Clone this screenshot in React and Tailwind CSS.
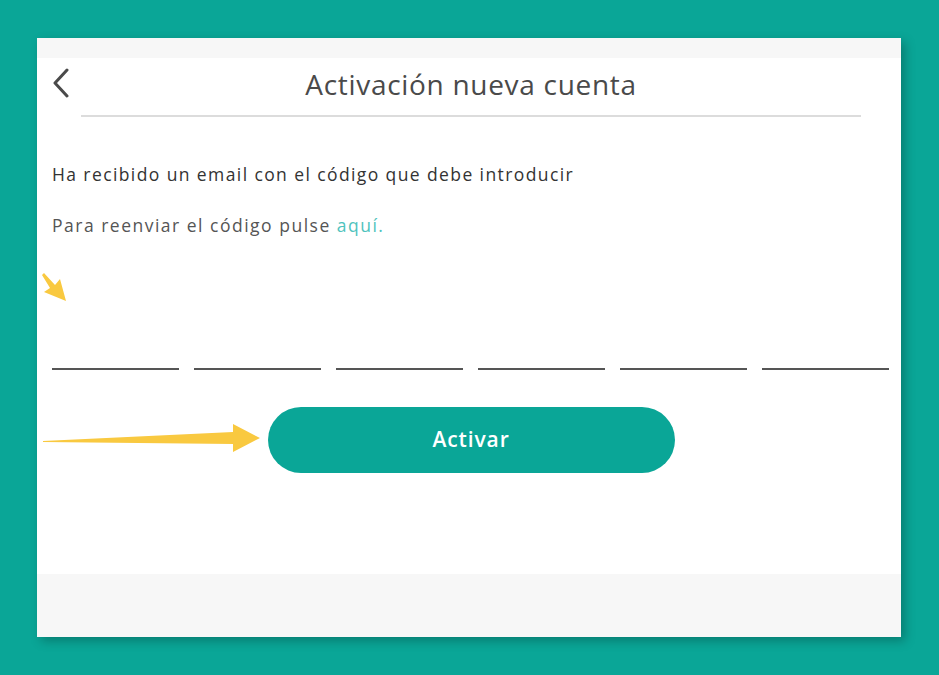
import React from "react";

const CODE_SLOTS = [0, 1, 2, 3, 4, 5];

export default function App() {
  return (
    <div
      className="relative min-h-[675px] w-full bg-[#0aa697] pt-[38px] pl-[37px]"
      style={{ fontFamily: '"Open Sans", "Noto Sans", sans-serif' }}
    >
      <div className="flex h-[599px] w-[864px] flex-col bg-[#f7f7f7] shadow-[4px_4px_10px_rgba(0,0,0,0.25)]">
        <div className="h-[20px]" />
        <main className="flex h-[516px] flex-col bg-white">
          <header className="relative flex h-[57px] items-center justify-center">
            <button className="absolute left-[14px] top-[10px] text-[#444]">
              <svg width="20" height="30" viewBox="0 0 20 30" fill="none">
                <path d="M16 2 L4 15 L16 28" stroke="#4a4a4a" strokeWidth="3" strokeLinecap="round" strokeLinejoin="round" />
              </svg>
            </button>
            <h1 className="mt-[-6px] ml-[4px] text-[28px] font-medium tracking-[0.7px] text-[#4a4a4a]">Activación nueva cuenta</h1>
          </header>
          <div className="ml-[44px] mr-[40px] h-[2px] bg-[#dcdcdc]" />

          <section className="pl-[15px] pr-[12px]">
            <p className="mt-[44px] text-[17.5px] leading-[26px] tracking-[1.4px] text-[#333]">Ha recibido un email con el código que debe introducir</p>
            <p className="mt-[25px] text-[17.5px] leading-[26px] tracking-[1.5px] text-[#555]">
              Para reenviar el código pulse <a className="text-[#4fc3bd]">aquí.</a>
            </p>

            <div className="mt-[112px] grid grid-cols-6 gap-[15px]">
              {CODE_SLOTS.map((slot) => (
                <input key={slot} maxLength={1} className="h-[20px] border-b-2 border-[#555] bg-transparent text-center outline-none" />
              ))}
            </div>

            <div className="mt-[37px] flex justify-center pl-[1px]">
              <button className="h-[66px] w-[407px] rounded-full bg-[#0aa697] text-[21px] font-semibold tracking-[0.9px] text-white">Activar</button>
            </div>
          </section>
        </main>
      </div>

      {/* highlight arrows drawn over the screenshot */}
      <svg className="pointer-events-none absolute left-[40px] top-[268px]" width="32" height="38" viewBox="0 0 32 38">
        <polygon points="4,5 15,17 20,11 26,33 4,24 10,20 2,7" fill="#f9c940" />
      </svg>
      <svg className="pointer-events-none absolute left-[40px] top-[420px]" width="225" height="36" viewBox="0 0 225 36">
        <polygon points="3,21 193,12 193,4 220,18 193,32 193,24 3,22" fill="#f9c940" />
      </svg>
    </div>
  );
}
